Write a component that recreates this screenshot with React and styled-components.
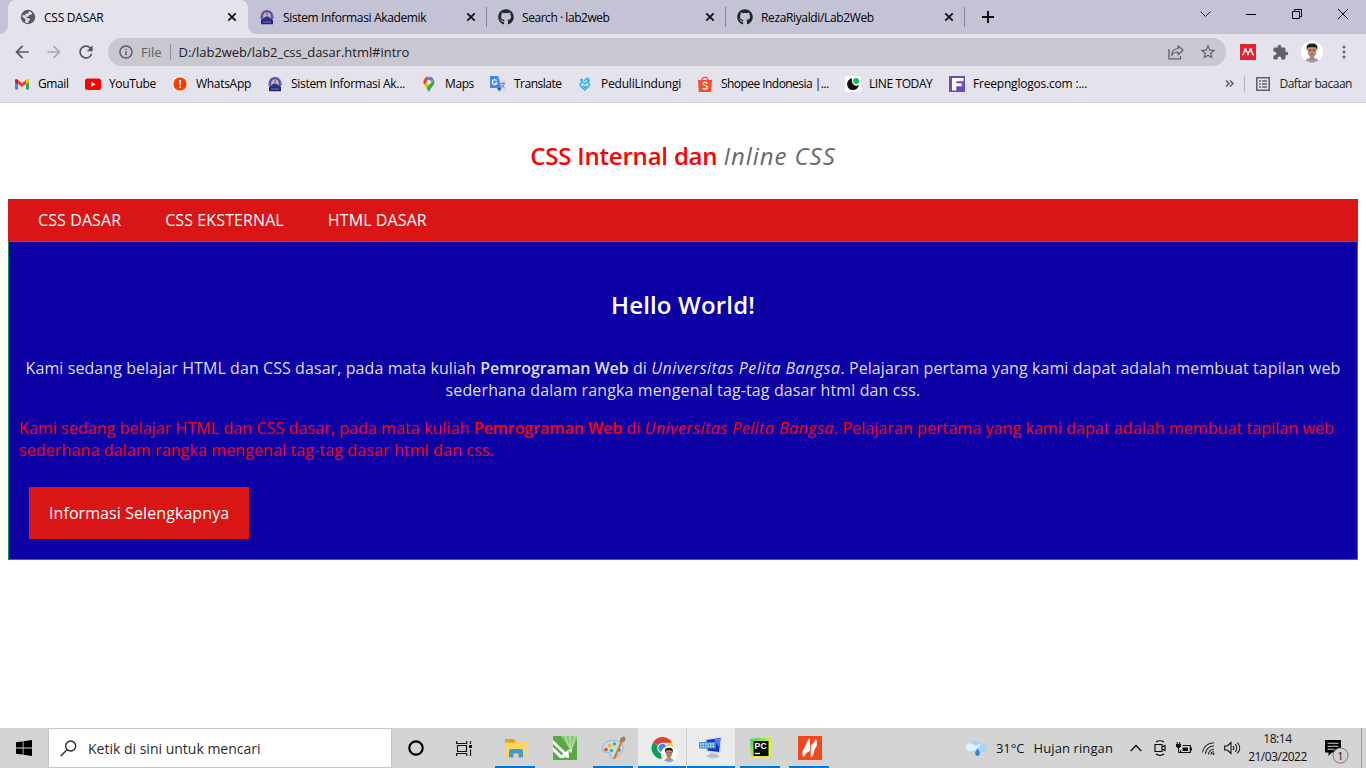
import React from 'react';
import styled, { createGlobalStyle } from 'styled-components';
import { FaGithub } from 'react-icons/fa';
import { MdArrowBack, MdArrowForward, MdRefresh, MdExtension, MdStarOutline, MdInfoOutline } from 'react-icons/md';

const GlobalStyle = createGlobalStyle`
  * { box-sizing: border-box; }
  body { margin: 0; background: #fff; overflow: hidden; }
  svg { display: block; flex: none; }
`;

const Screen = styled.div`
  width: 1366px; height: 768px; display: flex; flex-direction: column;
  background: #fff; overflow: hidden;
  font-family: "Open Sans", "Noto Sans", sans-serif; font-size: 12px; color: #000;
`;
const Label = styled.span`
  white-space: nowrap; letter-spacing: ${p => p.$ls || 0}px;
`;

/* ---------- browser chrome ---------- */
const TabStrip = styled.div`
  height: 34px; flex: none; display: flex; background: #c4c3d6; padding-left: 8px;
`;
const Tab = styled.div`
  position: relative; width: ${p => (p.$active ? 240 : 239)}px; height: 34px; display: flex; align-items: center;
  padding: 0 11px 0 ${p => (p.$active ? 12 : 11)}px;
  border-radius: 8px 8px 0 0;
  background: ${p => (p.$active ? '#e4e3ec' : 'transparent')};
  &::before, &::after {
    content: ''; display: ${p => (p.$active ? 'block' : 'none')};
    position: absolute; bottom: 0; width: 8px; height: 8px;
  }
  &::before { left: -8px; background: radial-gradient(circle at 0 0, transparent 7.5px, #e4e3ec 8px); }
  &::after { right: -8px; background: radial-gradient(circle at 100% 0, transparent 7.5px, #e4e3ec 8px); }
`;
const TabIcon = styled.span`width: 16px; margin-right: 8px; display: flex; justify-content: center;`;
const TabTitle = styled(Label)`flex: 1;`;
const Separator = styled.span`
  width: 1px; height: ${p => p.$h || 20}px; background: ${p => p.$color || '#85849a'}; flex: none;
`;
const TabSeparator = styled(Separator)`align-self: center; margin-left: -1px;`;
const NewTab = styled.div`width: 46px; display: flex; align-items: center; justify-content: center;`;
const WindowButtons = styled.div`margin-left: auto; display: flex; height: 28px;`;
const WindowButton = styled.div`width: 46px; display: flex; align-items: center; justify-content: center;`;

const Toolbar = styled.div`
  height: 36px; flex: none; display: flex; align-items: center; background: #e4e3ec; padding-left: 12px;
`;
const NavButton = styled.div`
  width: 32px; display: flex; align-items: center; color: ${p => p.$color || '#55565a'};
`;
const AddressBar = styled.div`
  width: 1118px; height: 28px; border-radius: 14px; background: #c9c8d1; display: flex; align-items: center;
  padding: 0 2px 0 10px; font-size: 13px; color: #202124;
`;
const Scheme = styled(Label)`color: #606166; margin: 0 8px 0 7px;`;
const Url = styled(Label)`flex: 1; margin-left: 8px;`;
const BarAction = styled.span`width: 32px; display: flex; align-items: center; justify-content: center; color: #5f6368;`;
const Extensions = styled.div`display: flex; align-items: center; margin-left: 6px; color: #5f6368;`;

const BookmarksBar = styled.div`
  height: 33px; flex: none; display: flex; align-items: center; background: #e4e3ec; padding: 0 14px 5px 14px;
  border-bottom: 1px solid #d5d4dc;
`;
const Bookmark = styled.div`width: ${p => p.$w}px; display: flex; align-items: center; flex: none;`;
const BookmarkIcon = styled.span`width: 16px; height: 16px; margin-right: 8px; display: flex; align-items: center; justify-content: center;`;
const ReadingList = styled.div`display: flex; align-items: center; margin-left: 11px; gap: 9px; color: #202124;`;
const Overflow = styled.div`margin-left: auto; margin-right: 10px;`;

/* ---------- page ---------- */
const Page = styled.main`
  flex: 1; padding: 0 8px; background: #fff; font-size: 16px; line-height: 22px;
`;
const PageHeader = styled.h1`
  height: 96px; margin: 0; padding-top: 36px; text-align: center; font-size: 24px; line-height: 33px;
  font-weight: 600; color: #f00; letter-spacing: -0.2px;
  i { color: #696969; font-weight: 400; letter-spacing: 0.95px; }
`;
const PageNav = styled.nav`height: 42px; background: #d91515; display: flex; padding: 10px 8px 0; color: #fff;`;
const NavLink = styled.a`padding: 0 22px; white-space: nowrap; letter-spacing: 0.1px;`;
const Hero = styled.section`
  height: 319px; border: 1px solid #0b9050; background: #0d00a5; padding: 10px; color: #fff;
`;
const HeroTitle = styled.h1`
  margin: 36px 0 36px; text-align: center; font-size: 24px; line-height: 33px; font-weight: 600; letter-spacing: 0.17px;
`;
const Paragraph = styled.p`
  margin: 0 0 16px; white-space: nowrap; letter-spacing: 0.08px;
  text-align: ${p => (p.$center ? 'center' : 'left')};
  color: ${p => (p.$center ? '#dcdff0' : '#f00')};
  b { font-weight: 600; letter-spacing: -0.05px; }
  i { letter-spacing: 0.46px; }
`;
const LastLine = styled.span`letter-spacing: 0.12px;`;
const MoreButton = styled.a`
  display: block; width: 220px; height: 52px; margin: 26px 0 0 10px; padding: 15px 20px;
  background: #d91515; color: #fff; white-space: nowrap; letter-spacing: 0.08px;
`;

/* ---------- taskbar ---------- */
const Taskbar = styled.footer`height: 40px; flex: none; display: flex; background: #d4d4d4; color: #111;`;
const StartButton = styled.div`width: 48px; display: flex; align-items: center; justify-content: center;`;
const SearchBox = styled.div`
  width: 344px; background: #fff; border: 1px solid #c6c6c6; display: flex; align-items: center;
  padding-left: 11px; font-size: 14px; gap: 11px; color: #2b2b2b;
`;
const TaskButton = styled.div`
  width: ${p => p.$w || 49}px; display: flex; align-items: center; justify-content: center; position: relative;
  background: ${p => (p.$lit ? '#ebebeb' : 'transparent')};
  ${p => (p.$lit ? 'border-right: 1px solid #d4d4d4;' : '')}
  &::after {
    content: ''; display: ${p => (p.$open ? 'block' : 'none')}; position: absolute; bottom: 0; height: 2px;
    left: ${p => (p.$lit ? 0 : 4)}px; right: ${p => (p.$lit ? 0 : 5)}px; background: #0078d7;
  }
`;
const Tasks = styled.div`display: flex; margin-left: 2px;`;
const Tray = styled.div`margin-left: auto; display: flex; align-items: center;`;
const Weather = styled.div`display: flex; align-items: center; font-size: 13px; margin-right: 11px;`;
const Temperature = styled(Label)`margin: 0 9px 0 9px;`;
const TrayIcon = styled.div`width: 24px; display: flex; justify-content: center;`;
const Clock = styled.div`
  width: 67px; display: flex; flex-direction: column; align-items: center; font-size: 12px; line-height: 18px;
`;
const Notifications = styled.div`width: 50px; display: flex; justify-content: center;`;
const ShowDesktop = styled.div`width: 5px; height: 40px; border-left: 1px solid #9c9c9c;`;

/* ---------- icons ---------- */
const Svg = ({ w = 16, h = w, vb, children }) => (
  <svg width={w} height={h} viewBox={vb || `0 0 ${w} ${h}`} fill="none" overflow="visible">{children}</svg>
);
const CloseIcon = () => <Svg w={10}><path d="M1.3 1.3l7.4 7.4M8.7 1.3L1.3 8.7" stroke="#111" strokeWidth="1.8" /></Svg>;
const GlobeIcon = () => (
  <Svg>
    <circle cx="8" cy="8" r="7.200" fill="#55585e" />
    <path d="M9.200 2.300c1.200.2 2.400.900 3.200 1.900l-1.200 1.600-2 .3-.6 1.500-2.200.2.300 1.300 2.500.1 1 1.800-1.600 1.100-.3 1.900c-1.500.1-2.700-.4-3.700-1.200l1.300-1.500-1.500-2L2.300 8c0-.700.1-1.300.3-1.900l2.600.2.4-1.600 2-.3z" fill="#dcdbe5" />
  </Svg>
);
const CampusIcon = () => (
  <Svg>
    <path d="M1.300 10C.8 4.500 3.500 .8 8 .8s7.200 3.700 6.700 9.200z" fill="#8583b5" />
    <path d="M3 10V7.500a5 5.300 0 0 1 10 0V10" stroke="#4543a0" strokeWidth="1.200" />
    <path d="M4.500 9.500V7a3.500 3.500 0 0 1 7 0v2.500z" fill="#b9b8dc" />
    <path d="M2 11l2-1.500h8l2 1.500v4.300H2z" fill="#27277f" />
    <path d="M5 8.500l3-1.300 3 1.300V11H5z" fill="#31318a" />
    <path d="M8 2.800l1.200 3.400H6.800z" fill="#e1433d" />
    <path d="M4 13h8" stroke="#8d8cc6" strokeWidth=".8" />
  </Svg>
);
const GmailIcon = () => (
  <Svg>
    <path d="M1 3.6V13.4h3V7z" fill="#4285f4" /><path d="M15 3.6V13.4h-3V7z" fill="#34a853" />
    <path d="M4 4v4l4 3 4-3V4L8 7z" fill="#ea4335" />
    <path d="M1 4.500V6l3 2.200V4C2.600 2.300 1 3 1 4.500z" fill="#c5221f" />
    <path d="M15 4.500V6l-3 2.200V4c1.400-1.700 3-1 3 .5z" fill="#fbbc04" />
  </Svg>
);
const YouTubeIcon = () => (
  <Svg><rect x="0" y="2.500" width="16" height="11.500" rx="2.500" fill="#f00" /><path d="M6.300 5.800v5l4.300-2.500z" fill="#fff" /></Svg>
);
const AlertIcon = () => (
  <Svg><circle cx="8" cy="8" r="7.700" fill="#fff" /><circle cx="8" cy="8" r="6.700" fill="#ff3d00" /><path d="M7 4h2l-.3 5H7.300zM7.100 10.200h1.800V12H7.100z" fill="#fff" /></Svg>
);
const MapsIcon = () => (
  <Svg>
    <path d="M3.700 2.500A5.500 5.500 0 0 0 3.400 9L6.600 5z" fill="#ea4335" />
    <path d="M8 .5a5.500 5.500 0 0 0-4.500 2.200L6.400 5z" fill="#ea4335" />
    <path d="M3.300 8.800L9.500 2l3.300 1.200-7.200 9z" fill="#fbbc04" />
    <path d="M12.900 3.400c1.600 3.800-.6 6-2.400 8.100C9.300 13 9 15.500 8 15.500c-1 0-1.200-1.900-2.500-3.600z" fill="#34a853" />
    <path d="M8 .5a5.500 5.500 0 0 1 4.700 2.600L9.400 7 6.500 5 8.300.5z" fill="#4285f4" />
    <circle cx="8" cy="6" r="2" fill="#fff" />
  </Svg>
);
const TranslateIcon = () => (
  <Svg>
    <path d="M6 4h10v12H9z" fill="#dcdcdc" /><path d="M0 0h8.200l3.300 12H0z" fill="#4a87f5" />
    <path d="M7 12h4.500L9.200 15.500z" fill="#2a56c6" />
    <path d="M6.700 4.700A2.400 2.400 0 1 0 7 7H4.900" stroke="#fff" strokeWidth="1.200" />
    <path d="M10.500 7.500H15M12.700 6.200v1.300M14.200 7.500c-.5 2-1.500 3.300-3 4.500M11.700 9c.8 1.500 1.800 2.300 3 3" stroke="#74849a" />
  </Svg>
);
const HeartsIcon = () => (
  <Svg>
    <g stroke="#29aee6" strokeWidth="1.400">
      <path d="M7.800 14L3.900 10.300a2.200 2.200 0 0 1 3.100-3.200l.8.800.8-.8a2.200 2.200 0 0 1 3.100 3.200z" />
      <path d="M5.600 9.800l2.200 1.700L10 9.800" />
    </g>
    <circle cx="4.600" cy="4" r="1.500" fill="#29aee6" /><path d="M7.300 5l2.200-2.700 1.200 1 .9-1.500" stroke="#29aee6" strokeWidth="1.300" /><circle cx="11.400" cy="4.500" r="1.400" fill="#29aee6" />
  </Svg>
);
const ShopeeIcon = () => (
  <Svg>
    <path d="M1 4h14l-.8 12H1.800z" fill="#f2502f" /><path d="M5 4.500C5 .2 11 .2 11 4.500" stroke="#f2502f" strokeWidth="1.300" />
    <path d="M10.300 7.200C8.500 5.700 5.700 6.300 6 8c.3 1.800 4.500 1.300 4.400 3.500-.1 1.900-3 2-4.700.7" stroke="#fff" strokeWidth="1.200" />
  </Svg>
);
const LineIcon = () => (
  <Svg><rect width="16" height="16" rx="2.500" fill="#fff" /><path d="M7 2.200A6 6 0 1 0 14 9c-1.500 1-4 .8-5.500-.6C6.900 6.900 6.500 4.400 7 2.200z" fill="#111" /><circle cx="11.200" cy="5" r="3" fill="#06c755" /></Svg>
);
const FreepngIcon = () => (
  <Svg><path d="M0 0h16v16H0z" fill="#6a4db8" /><path d="M3 14.500V2h11.500v3.200H7.300v2h5.500v3H7.300v4.300z" fill="#fff" /></Svg>
);
const ShareIcon = () => (
  <Svg><path d="M1 5v9.800h11.500V12" stroke="#606166" strokeWidth="1.300" /><path d="M10 1.800v2.700C6 4.800 4 7.300 3.600 11.300 5.300 9 7.300 8 10 8v2.800l5-4.500z" stroke="#606166" strokeWidth="1.200" strokeLinejoin="round" /></Svg>
);
const MendeleyIcon = () => (
  <Svg>
    <path d="M0 0h16v16H0z" fill="#e9202e" />
    <circle cx="5.300" cy="5.800" r="1.600" fill="#fff" /><circle cx="10.700" cy="5.800" r="1.600" fill="#fff" />
    <path d="M2.800 10.700c1.300-.5.700-3 2.300-4.200M13.200 10.700c-1.300-.5-.7-3-2.300-4.200M6 6.700c.2 1.200 1 1.800 2 1.800s1.800-.6 2-1.800" stroke="#fff" strokeWidth="1.400" strokeLinecap="round" />
    <circle cx="8" cy="10.300" r="1.100" fill="#fff" />
  </Svg>
);
const Portrait = ({ size }) => (
  <Svg w={size} vb="0 0 22 22">
    <circle cx="11" cy="11" r="11" fill="#fff" />
    <path d="M4.500 19.800c1-2.500 3.500-3.300 6.500-3.300s5.500.8 6.500 3.300A11 11 0 0 1 4.500 19.800z" fill="#9aa0b4" />
    <path d="M9 14h4v4l-2 1.500L9 18z" fill="#b98266" />
    <path d="M6.500 8.500c0-6 9-6 9 0 0 4.500-1.800 8-4.500 8s-4.500-3.500-4.500-8z" fill="#bd8a70" />
    <path d="M6 9.500C4.500 3.500 7.500 2.500 11 2.500s6.500 1 5 7l-1-3c-2.500-.8-5-.8-8 0z" fill="#241d1c" />
    <path d="M8 9.300h2M12 9.300h2" stroke="#3c2822" /><path d="M9.500 13.300h3" stroke="#8c4b41" />
  </Svg>
);
const ListIcon = () => (
  <Svg w={14} vb="0.5 0.5 14 14"><path d="M1.300 1.300h12.400v12.400H1.300z" stroke="#5f6368" strokeWidth="1.600" /><path d="M3.500 4.500h2M6.500 4.500h5M3.500 7.500h2M6.500 7.500h5M3.500 10.500h2M6.500 10.500h5" stroke="#5f6368" strokeWidth="1.500" /></Svg>
);
const ExplorerIcon = () => (
  <Svg w={22} h={19}>
    <path d="M0 0h9l1.500 2H21v3H0z" fill="#dfa21a" /><path d="M0 3.500h9L10.500 2H21.500v15.500H0z" fill="#ffd560" />
    <path d="M4 18.500v-6.500q0-2 2-2h10q2 0 2 2v6.500h-4.500v-4h-5v4z" fill="#3f99dd" />
  </Svg>
);
const CorelIcon = () => (
  <Svg w={24}>
    <path d="M0 0h24v24H0z" fill="#58a844" />
    <path d="M8 0l8.500 13h2.500L24 3V0z" fill="#8bc77d" />
    <path d="M12 0l4.800 12M17 0l.5 12M22 0l-3.500 12" stroke="#c4e4ba" />
    <path d="M0 4l15 14.500V22L0 8zM0 11l11.500 11H7L0 15z" fill="#fff" />
    <path d="M15.500 13.500l.5 8.500-9-1.500z" fill="#fff" />
    <path d="M16 13h3.500l-.6 3.500h-2.300z" fill="#e8f5e3" />
  </Svg>
);
const PaintIcon = () => (
  <Svg w={25} h={24}>
    <path d="M1.500 14C0 7 9 3 16.500 5c6.500 1.800 7 8 3.500 12-3 4-9 6.500-10.500 4.500-.8-1.800 1-3-.5-4.500S2 17 1.500 14z" fill="#c3def0" stroke="#7aa9c7" strokeWidth=".8" />
    <circle cx="5" cy="13.500" r="1.800" fill="#d84b3b" /><circle cx="8.500" cy="9.500" r="1.800" fill="#f3b12f" /><circle cx="13.500" cy="8" r="1.800" fill="#54b64b" /><circle cx="10.500" cy="14.500" r="1.800" fill="#54b64b" /><circle cx="18" cy="14" r="1.800" fill="#3e6fc4" />
    <path d="M21 5L13.500 22" stroke="#e07e28" strokeWidth="2.300" strokeLinecap="round" /><path d="M19 5.500c-.5-3 1.500-4.500 4-5 1.800 1 2 3.500 0 5.500z" fill="#a77a52" />
  </Svg>
);
const ChromeIcon = () => (
  <Svg w={23} h={24}>
    <path d="M11.500 12L2 6.500A11 11 0 0 1 21 6.500z" fill="#db4437" /><path d="M11.500 12.500L2 6.400A11 11 0 0 0 10.500 23z" fill="#0f9d58" />
    <path d="M21 6.800H11.500l1 6L10.500 23A11 11 0 0 0 21 6.800z" fill="#ffcd40" />
    <circle cx="11.500" cy="12" r="5.200" fill="#fff" /><circle cx="11.500" cy="12" r="4.200" fill="#4285f4" />
    <g transform="translate(10 10)"><Portrait size={16} /></g>
  </Svg>
);
const RemoteIcon = () => (
  <Svg w={24} h={24}>
    <path d="M12 17l6 1 3 3-8 1.500-6-2z" fill="#b9bfc6" /><path d="M6 3l17-2.500L21.500 18 7 16z" fill="#d4dae0" />
    <path d="M7.500 4L21.500 2 20 16 8.500 14.500z" fill="#1733c4" /><path d="M15 3l6.500-1L20.300 12z" fill="#527af0" />
    <path d="M0 6h17v6.500H0z" fill="#3a91d8" /><path d="M1 8h15M1 10.500h15" stroke="#d7ecfa" strokeWidth="1.300" strokeDasharray="1.500 1" />
  </Svg>
);
const PyCharmIcon = () => (
  <Svg w={22}>
    <defs><linearGradient id="pc" x1="0" y1="0" x2="22" y2="22" gradientUnits="userSpaceOnUse"><stop stopColor="#21d789" /><stop offset=".3" stopColor="#7fe63a" /><stop offset=".6" stopColor="#e9f23c" /><stop offset="1" stopColor="#c8ee3c" /></linearGradient></defs>
    <path d="M0 2l6-1h15v20H1z" fill="url(#pc)" /><path d="M3.500 4h15v15h-15z" fill="#0a0a0a" />
    <text x="4.600" y="12.300" fontFamily="Liberation Sans, sans-serif" fontWeight="700" fontSize="8.500" textLength="12" fill="#fff">PC</text>
    <path d="M5 16.500h5" stroke="#fff" strokeWidth="1.300" />
  </Svg>
);
const NitroIcon = () => (
  <Svg w={24}>
    <path d="M0 0h24v24H0z" fill="#f1491d" />
    <path d="M12 2v13c-3 1-5 3.500-6.500 6.500-1.500-3-1.500-6.500.5-9C8 9.700 8.500 5 12 2z" fill="#fff" />
    <path d="M12.800 9c2.500-1 4-3.500 5-6.500 1.700 3 1.700 7-.3 9.500-2 2.700-1.200 7.500-4.700 10z" fill="#fff" />
  </Svg>
);
const WeatherIcon = () => (
  <Svg w={21} h={17}>
    <path d="M5 12a4.500 4.500 0 0 1 0-8.500C6.500-.8 13.500-.5 14.500 3.500c4-1 6.500 2 6 5-.4 2.300-2 3.500-4 3.500z" fill="#a9d3f8" />
    <path d="M3 11.500a4 4 0 0 1 2-8c2 .2 3 2 5 2s3-2 5-1.500c-2 4-7 8-12 7.500z" fill="#e0f1ff" />
    <path d="M11.500 8.500c1.500 2.400 2.400 3.800 2.400 5a2.400 2.400 0 0 1-4.800 0c0-1.200.9-2.600 2.400-5z" fill="#2587dd" />
  </Svg>
);

const TABS = [
  { title: 'CSS DASAR', icon: <GlobeIcon />, active: true, ls: -0.25 },
  { title: 'Sistem Informasi Akademik', icon: <CampusIcon />, ls: -0.36 },
  { title: 'Search · lab2web', icon: <FaGithub size={16} color="#24292f" />, ls: -0.45 },
  { title: 'RezaRiyaldi/Lab2Web', icon: <FaGithub size={16} color="#24292f" />, ls: -0.36 },
];
const BOOKMARKS = [
  ['Gmail', <GmailIcon />, 71, -0.4], ['YouTube', <YouTubeIcon />, 87, -0.35], ['WhatsApp', <AlertIcon />, 95, -0.3],
  ['Sistem Informasi Ak...', <CampusIcon />, 154, -0.3], ['Maps', <MapsIcon />, 69, -0.4], ['Translate', <TranslateIcon />, 87, -0.5],
  ['PeduliLindungi', <HeartsIcon />, 120, -0.2], ['Shopee Indonesia |...', <ShopeeIcon />, 148, -0.55],
  ['LINE TODAY', <LineIcon />, 104, -0.4], ['Freepnglogos.com :...', <FreepngIcon />, 140, -0.2],
];
const TASKS = [
  { icon: <ExplorerIcon />, open: true }, { icon: <CorelIcon /> }, { icon: <PaintIcon />, open: true },
  { icon: <ChromeIcon />, open: true, lit: true }, { icon: <RemoteIcon />, open: true, lit: true },
  { icon: <PyCharmIcon />, open: true }, { icon: <NitroIcon />, open: true },
];

const Lesson = ({ center }) => (
  <Paragraph $center={center}>
    Kami sedang belajar HTML dan CSS dasar, pada mata kuliah <b>Pemrograman Web</b> di <i>Universitas Pelita Bangsa</i>. Pelajaran pertama yang kami dapat adalah membuat tapilan web<br />
    <LastLine>sederhana dalam rangka mengenal tag-tag dasar html dan css.</LastLine>
  </Paragraph>
);

export default function App() {
  return (
    <Screen>
      <GlobalStyle />
      <TabStrip>
        {TABS.map(t => (
          <React.Fragment key={t.title}>
            <Tab $active={t.active}>
              <TabIcon>{t.icon}</TabIcon><TabTitle $ls={t.ls}>{t.title}</TabTitle><CloseIcon />
            </Tab>
            {!t.active && <TabSeparator />}
          </React.Fragment>
        ))}
        <NewTab><Svg w={12}><path d="M6 0v12M0 6h12" stroke="#111" strokeWidth="2" /></Svg></NewTab>
        <WindowButtons>
          <WindowButton><Svg w={11} h={7}><path d="M.5 .5l5 5 5-5" stroke="#222" /></Svg></WindowButton>
          <WindowButton><Svg w={10} h={1}><path d="M0 .5h10" stroke="#000" /></Svg></WindowButton>
          <WindowButton><Svg w={10}><path d="M.5 2.500h7v7h-7zM2.500 2.500v-2h7v7h-2" stroke="#000" /></Svg></WindowButton>
          <WindowButton><Svg w={10}><path d="M0 0l10 10M10 0L0 10" stroke="#000" /></Svg></WindowButton>
        </WindowButtons>
      </TabStrip>

      <Toolbar>
        <NavButton><MdArrowBack size={20} /></NavButton>
        <NavButton $color="#a9a9b0"><MdArrowForward size={20} /></NavButton>
        <NavButton><MdRefresh size={20} /></NavButton>
        <AddressBar>
          <MdInfoOutline size={16} color="#55565a" />
          <Scheme>File</Scheme><Separator $h={16} $color="#8e8e96" />
          <Url $ls={-0.04}>D:/lab2web/lab2_css_dasar.html#intro</Url>
          <BarAction><ShareIcon /></BarAction>
          <BarAction><MdStarOutline size={18} /></BarAction>
        </AddressBar>
        <Extensions>
          <BarAction><MendeleyIcon /></BarAction>
          <BarAction><MdExtension size={17} /></BarAction>
          <BarAction><Portrait size={22} /></BarAction>
          <BarAction><Svg w={4} h={14}><circle cx="2" cy="2" r="1.500" fill="#5f6368" /><circle cx="2" cy="7" r="1.500" fill="#5f6368" /><circle cx="2" cy="12" r="1.500" fill="#5f6368" /></Svg></BarAction>
        </Extensions>
      </Toolbar>

      <BookmarksBar>
        {BOOKMARKS.map(([name, icon, w, ls]) => (
          <Bookmark key={name} $w={w}><BookmarkIcon>{icon}</BookmarkIcon><Label $ls={ls}>{name}</Label></Bookmark>
        ))}
        <Overflow><Svg w={9} h={7}><path d="M1 .5l3 3-3 3M5 .5l3 3-3 3" stroke="#5f6368" strokeWidth="1.600" /></Svg></Overflow>
        <Separator $h={16} $color="#b3b2bc" />
        <ReadingList><ListIcon /><Label $ls={-0.48}>Daftar bacaan</Label></ReadingList>
      </BookmarksBar>

      <Page>
        <PageHeader>CSS Internal dan <i>Inline CSS</i></PageHeader>
        <PageNav><NavLink>CSS DASAR</NavLink><NavLink>CSS EKSTERNAL</NavLink><NavLink>HTML DASAR</NavLink></PageNav>
        <Hero>
          <HeroTitle>Hello World!</HeroTitle>
          <Lesson center />
          <Lesson />
          <MoreButton>Informasi Selengkapnya</MoreButton>
        </Hero>
      </Page>

      <Taskbar>
        <StartButton><Svg w={16}><path d="M0 2.300l6.700-.9v6.200H0zM7.500 1.300L16 0v7.600H7.500zM0 8.400h6.700v6.200L0 13.700zM7.500 8.400H16V16l-8.500-1.200z" fill="#000" /></Svg></StartButton>
        <SearchBox>
          <Svg w={17}><circle cx="10.700" cy="6" r="5" stroke="#222" strokeWidth="1.300" /><path d="M7 9.800L.8 16" stroke="#222" strokeWidth="1.300" /></Svg>
          <Label>Ketik di sini untuk mencari</Label>
        </SearchBox>
        <TaskButton $w={48}><Svg w={16}><circle cx="8" cy="8" r="6.700" stroke="#000" strokeWidth="2.200" /></Svg></TaskButton>
        <TaskButton $w={49}>
          <Svg w={17} h={15}><path d="M.7 0v2.500h10V0M.7 15v-2.500h10V15M1.500 4.500h9v6h-9zM14.500 0v3M14.500 8.500V15" stroke="#111" strokeWidth="1.200" /><path d="M13 4h3v3h-3z" fill="#111" /></Svg>
        </TaskButton>
        <Tasks>{TASKS.map((t, i) => <TaskButton key={i} $open={t.open} $lit={t.lit}>{t.icon}</TaskButton>)}</Tasks>
        <Tray>
          <Weather><WeatherIcon /><Temperature>31°C</Temperature><Label $ls={0.1}>Hujan ringan</Label></Weather>
          <TrayIcon><Svg w={12} h={8}><path d="M.7 7L6 1.500 11.300 7" stroke="#111" strokeWidth="1.300" /></Svg></TrayIcon>
          <TrayIcon><Svg w={12} h={16}><path d="M1 4.500h7v7H1zM8 7l3-1.500v5L8 9M2 2c2-1.700 6-1.700 8 0M2 14c2 1.700 6 1.700 8 0" stroke="#111" strokeWidth="1.200" /></Svg></TrayIcon>
          <TrayIcon><Svg w={16} h={13}><path d="M6.500 3.500h7.800v7H4.500V8" stroke="#111" strokeWidth="1.200" /><path d="M6.500 5.500h5.500v3.500H6.500zM14.500 5.500h1.500v3h-1.500zM0 2h5v2.500L3.500 6h-2L0 4.500z" fill="#111" /><path d="M1.300 0v2M3.700 0v2M2.500 6v4.500h2" stroke="#111" /></Svg></TrayIcon>
          <TrayIcon><Svg w={13} h={13}><g stroke="#222" strokeWidth="1.100"><path d="M.5 10.500C1 5 5.500 .8 12 .8M3.500 12C3.500 7.500 7 4 12 4M6.500 12.500c0-3 2.500-5.300 5.500-5.300M9 12.500c0-1.500 1.300-2.800 3-2.800" /></g><circle cx="11.500" cy="12" r="1" fill="#222" /></Svg></TrayIcon>
          <TrayIcon><Svg w={17} h={14}><path d="M.7 5h2.500L7 1.500v11L3.200 9H.7zM9 5c1 1.200 1 2.800 0 4M11.200 3.200c2 2.200 2 5.400 0 7.600M13.400 1.500c3 3.300 3 7.700 0 11" stroke="#111" strokeWidth="1.100" /></Svg></TrayIcon>
          <Clock><Label $ls={-0.4}>18:14</Label><Label $ls={-0.5}>21/03/2022</Label></Clock>
          <Notifications>
            <Svg w={25} h={28}>
              <path d="M1 6h16v12.500H8L4.500 22v-3.500H1z" fill="#000" /><path d="M3.500 9.300h11M3.500 12.300h11M3.500 15.300h7" stroke="#d4d4d4" strokeWidth="1.100" />
              <circle cx="16.500" cy="21.500" r="7.600" fill="#d0d0d0" stroke="#777" />
              <text x="16.500" y="25.500" textAnchor="middle" fontFamily="Open Sans, sans-serif" fontSize="11" fill="#111">1</text>
            </Svg>
          </Notifications>
          <ShowDesktop />
        </Tray>
      </Taskbar>
    </Screen>
  );
}
